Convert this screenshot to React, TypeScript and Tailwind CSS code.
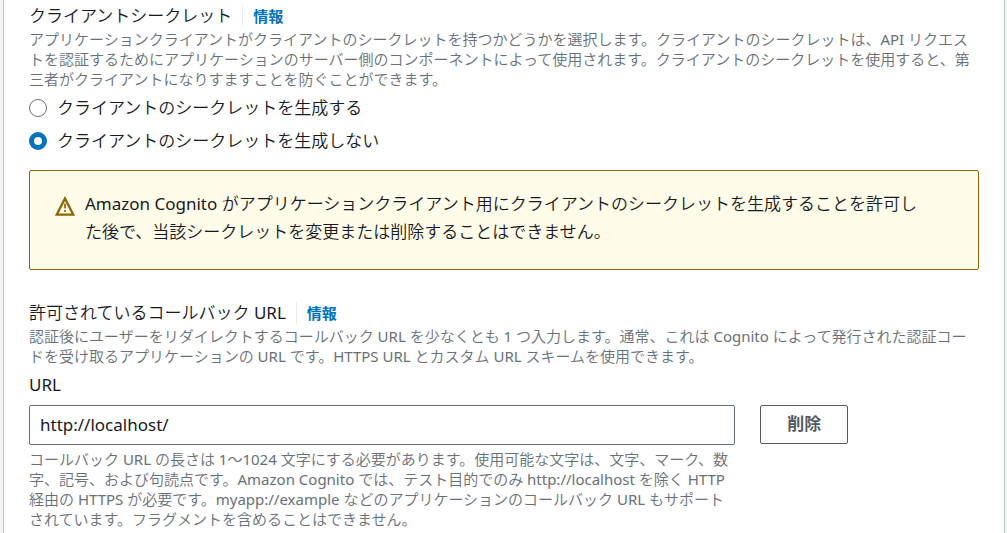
import { useState } from 'react'
import type { ReactNode } from 'react'

function FieldTitle({ children }: { children: ReactNode }) {
  return (
    <div className="flex items-center">
      <h3 className="text-[17px] leading-[22px]">{children}</h3>
      <a
        href="#info"
        className="ml-[10px] border-l border-[#eaeded] pl-[10px] font-['Noto_Sans','Noto_Sans_CJK_JP',sans-serif] text-[15px] leading-[22px] font-bold text-[#0073bb]"
      >
        情報
      </a>
    </div>
  )
}

function Description({ children }: { children: ReactNode }) {
  return <p className="mt-[2px] text-[15px] leading-5 text-[#687078]">{children}</p>
}

function WarningIcon() {
  return (
    <svg viewBox="0 0 20 20" className="mt-[10px] size-5 shrink-0" fill="none" stroke="#8d6605" aria-hidden="true">
      <path d="M10 2.4 18.3 18.7H1.7Z" strokeWidth="2.3" />
      <path d="M10 7.5v5M10 14v2" strokeWidth="1.7" />
    </svg>
  )
}

const opciones = [
  { id: 'generate', label: 'クライアントのシークレットを生成する' },
  { id: 'none', label: 'クライアントのシークレットを生成しない' },
]

export default function App() {
  const [secret, setSecret] = useState('none')
  const [url, setUrl] = useState('http://localhost/')

  return (
    <div
      lang="ja"
      className="bg-[#f2f3f3] pr-[2px] pl-[3px] font-['Noto_Sans','Noto_Sans_CJK_JP_DemiLight','Noto_Sans_CJK_JP_Light','Noto_Sans_CJK_JP',sans-serif] text-[#16191f]"
    >
      <main className="min-h-screen border-x border-[#bfc8c9] bg-white px-[25px] pt-[5px]">
        <section>
          <FieldTitle>クライアントシークレット</FieldTitle>
          <Description>
            アプリケーションクライアントがクライアントのシークレットを持つかどうかを選択します。クライアントのシークレットは、API リクエストを認証するためにアプリケーションのサーバー側のコンポーネントによって使用されます。クライアントのシークレットを使用すると、第三者がクライアントになりすますことを防ぐことができます。
          </Description>

          <div className="mt-[5px] flex flex-col items-start gap-[5px]">
            {opciones.map(o => (
              <label key={o.id} className="flex items-center gap-[10px] text-[17px] leading-7">
                <input
                  type="radio"
                  name="secret"
                  checked={secret === o.id}
                  onChange={() => setSecret(o.id)}
                  className="size-[18px] appearance-none rounded-full border border-[#687078] bg-white checked:border-[5px] checked:border-[#0073bb]"
                />
                {o.label}
              </label>
            ))}
          </div>
        </section>

        {/* Warning */}
        <div role="alert" className="mt-[15px] flex gap-[10px] rounded-xs border border-[#8d6605] bg-[#fffce9] px-[25px] pt-[15px] pb-[19px]">
          <WarningIcon />
          <p className="py-1 text-[17px] leading-7">
            Amazon Cognito がアプリケーションクライアント用にクライアントのシークレットを生成することを許可し<br />
            た後で、当該シークレットを変更または削除することはできません。
          </p>
        </div>

        {/* Callback URLs */}
        <section className="mt-8">
          <FieldTitle>許可されているコールバック URL</FieldTitle>
          <Description>
            認証後にユーザーをリダイレクトするコールバック URL を少なくとも 1 つ入力します。通常、これは Cognito によって発行された認証コードを受け取るアプリケーションの URL です。HTTPS URL とカスタム URL スキームを使用できます。
          </Description>

          <label htmlFor="url" className="mt-2 block text-[17px] leading-[22px]">URL</label>
          <div className="mt-[9px] grid grid-cols-4 items-start gap-x-[25px]">
            <div className="col-span-3">
              <input
                id="url"
                type="text"
                value={url}
                onChange={e => setUrl(e.target.value)}
                className="block h-10 w-full rounded-xs border border-[#687078] bg-white px-[10px] pb-[2px] text-[17px]"
              />
              <p className="mt-1 text-[15px] leading-5 text-[#687078]">
                コールバック URL の長さは 1～1024 文字にする必要があります。使用可能な文字は、文字、マーク、数字、記号、および句読点です。Amazon Cognito では、テスト目的でのみ http://localhost を除く HTTP 経由の HTTPS が必要です。myapp://example などのアプリケーションのコールバック URL もサポートされています。フラグメントを含めることはできません。
              </p>
            </div>
            <button
              type="button"
              className="h-[39px] justify-self-start rounded-xs border border-[#545b64] bg-white px-[26px] pb-[2px] font-['Noto_Sans','Noto_Sans_CJK_JP',sans-serif] text-[17px] leading-5 font-bold text-[#545b64]"
            >
              削除
            </button>
          </div>
        </section>
      </main>
    </div>
  )
}
